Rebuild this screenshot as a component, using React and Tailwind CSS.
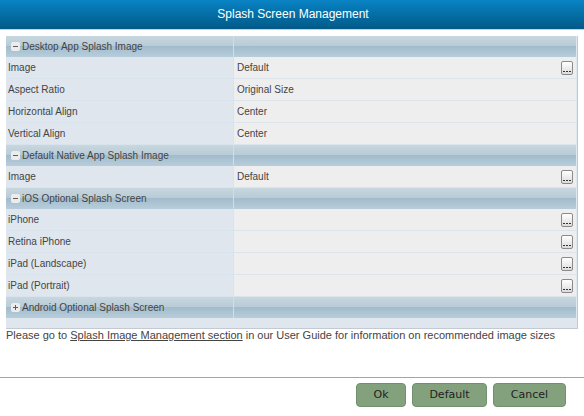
import React, { useState } from "react";

const GROUPS = [
  {
    title: "Desktop App Splash Image",
    open: true,
    rows: [
      { label: "Image", value: "Default", browse: true },
      { label: "Aspect Ratio", value: "Original Size" },
      { label: "Horizontal Align", value: "Center" },
      { label: "Vertical Align", value: "Center" },
    ],
  },
  {
    title: "Default Native App Splash Image",
    open: true,
    rows: [{ label: "Image", value: "Default", browse: true }],
  },
  {
    title: "iOS Optional Splash Screen",
    open: true,
    rows: [
      { label: "iPhone", value: "", browse: true },
      { label: "Retina iPhone", value: "", browse: true },
      { label: "iPad (Landscape)", value: "", browse: true },
      { label: "iPad (Portrait)", value: "", browse: true },
    ],
  },
  { title: "Android Optional Splash Screen", open: false, rows: [] },
];

function Toggle({ open, title, onClick }) {
  return (
    <button
      type="button"
      aria-expanded={open}
      aria-label={title}
      onClick={onClick}
      className="flex size-[9px] shrink-0 items-center justify-center rounded-[2px] bg-[#ececec]"
    >
      <svg viewBox="0 0 9 9" className="size-[9px]" shapeRendering="crispEdges">
        <path d={open ? "M2 4h5v1H2z" : "M2 4h5v1H2zM4 2h1v5H4z"} fill="#5c5c5c" />
      </svg>
    </button>
  );
}

function BrowseButton({ label }) {
  return (
    <button
      type="button"
      aria-label={"Browse " + label}
      className="flex h-[14px] w-3 items-center justify-center rounded-[2px] border border-[#8a8a8a] bg-linear-to-b from-white to-[#dcdcdc]"
    >
      <svg viewBox="0 0 10 12" className="h-3 w-[10px]" shapeRendering="crispEdges">
        <path d="M1 9h2v1H1zM4 9h2v1H4zM7 9h2v1H7z" fill="#333" />
      </svg>
    </button>
  );
}

function Group({ group }) {
  const [open, setOpen] = useState(group.open);
  return (
    <tbody>
      <tr className="h-[21px] bg-[linear-gradient(#c8d7df_0%,#b8cbd6_48%,#a2bccc_50%,#b8cddb_100%)]">
        <th scope="rowgroup" className="border-r border-[#d3dde6] p-0 text-left font-normal">
          <div className="flex items-center gap-[2px] pl-[5px]">
            <Toggle open={open} title={group.title} onClick={() => setOpen(!open)} />
            <span>{group.title}</span>
          </div>
        </th>
        <td className="p-0" />
      </tr>
      {open &&
        group.rows.map((row) => (
          <tr key={row.label} className="h-[22px]">
            <th
              scope="row"
              className="border-r border-b border-[#d9e3ec] bg-[#dfe6ee] px-[2px] py-0 text-left font-normal"
            >
              {row.label}
            </th>
            <td className="border-b border-[#dbe3eb] bg-[#eee] px-[3px] py-0">
              <div className="flex items-center justify-between">
                <span>{row.value}</span>
                {row.browse && <BrowseButton label={row.label} />}
              </div>
            </td>
          </tr>
        ))}
    </tbody>
  );
}

function ActionButton({ children, className }) {
  return (
    <button
      type="button"
      className={
        "h-6 rounded-[4px] border border-[#6f9170] bg-[#84a17e] font-['DejaVu_Sans',sans-serif] text-[11px] leading-4 text-[#222] " +
        className
      }
    >
      {children}
    </button>
  );
}

export default function App() {
  return (
    <main className="bg-white font-['Liberation_Sans',Arial,sans-serif] text-[#444]">
      <header className="flex h-[30px] items-center justify-center border-b border-[#c3d0e0] bg-linear-to-b from-[#0983c4] to-[#025a87] pb-[2px]">
        <h1 className="pl-[2px] text-xs text-white">Splash Screen Management</h1>
      </header>
      <div className="px-[6px] pt-[6px]">
        <div className="border-r border-b border-[#c3cad2] bg-[#dfe6ee] pr-px pb-[10px]">
          <table className="w-full table-fixed border-separate border-spacing-0 text-[10px] leading-4">
            <colgroup>
              <col className="w-2/5" />
              <col />
            </colgroup>
            {GROUPS.map((group) => (
              <Group key={group.title} group={group} />
            ))}
          </table>
        </div>
        <p className="h-12 text-[11px] leading-3">
          Please go to{" "}
          <a href="#guide" className="underline">
            Splash Image Management section
          </a>{" "}
          in our User Guide for information on recommended image sizes
        </p>
      </div>
      <footer className="flex justify-end gap-[6px] border-t border-[#a5a5a5] pt-[5px] pr-[18px] pb-2">
        <ActionButton className="w-[50px]">Ok</ActionButton>
        <ActionButton className="w-[75px]">Default</ActionButton>
        <ActionButton className="w-[73px]">Cancel</ActionButton>
      </footer>
    </main>
  );
}
